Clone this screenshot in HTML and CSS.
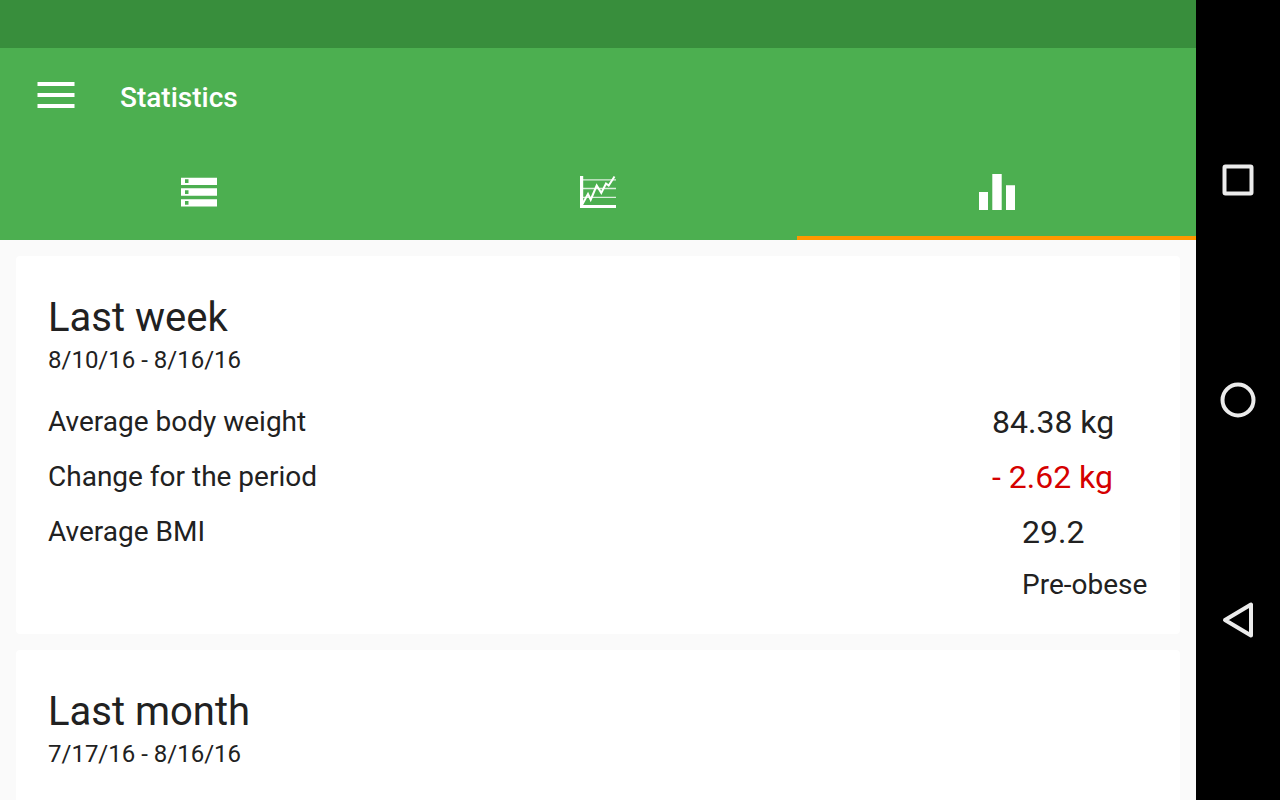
FILE: index.html
```html
<!DOCTYPE html>
<html lang="en">
<head>
    <meta charset="UTF-8">
    <meta name="viewport" content="width=device-width, initial-scale=1.0">
    <title>Statistics</title>
    <link rel="stylesheet" href="styles.css">
</head>
<body>
    <div class="app">
        <header class="header">
            <div class="status-bar"></div>
            <div class="toolbar">
                <button type="button" class="menu-btn" aria-label="Menu">
                    <svg width="38" height="26" viewBox="0 0 38 26" fill="#fff">
                        <path d="M.5 0h37v4H.5zM.5 11h37v4H.5zM.5 22h37v4H.5z"/>
                    </svg>
                </button>
                <h1 class="title">Statistics</h1>
            </div>
            <nav class="tabs">
                <a href="#records" class="tab" aria-label="Records">
                    <svg width="36" height="36" viewBox="0 0 36 36" fill="#fff">
                        <path fill-rule="evenodd" d="M0 3.700h36v7.300H0zM4 5.200v3.800h3.500v-3.800zM0 14.300h36v7.500H0zM4 16.200v3.800h3.500v-3.800zM0 25.200h36v7.300H0zM4 27v3.800h3.500v-3.800z"/>
                    </svg>
                </a>
                <a href="#chart" class="tab" aria-label="Chart">
                    <svg width="36" height="36" viewBox="0 0 36 36" fill="none" stroke="#fff">
                        <path stroke-width="1.300" stroke-opacity=".8" d="M2 5.900h34M2 14.500h34M2 23.300h34"/>
                        <path stroke-width="3.200" d="M1.600 2v30.500H36"/>
                        <path stroke-width="2" d="M2.500 30L8 20l2.700 5.700 6-14.200 4.600 7.500L26 9.500l2.700 2L34.500 2.500"/>
                    </svg>
                </a>
                <a href="#statistics" class="tab active" aria-label="Statistics">
                    <svg width="36" height="36" viewBox="0 0 36 36" fill="#fff">
                        <path d="M0 18h9v18H0zM13.300 0h9.400v36h-9.400zM27 11.300h9V36h-9z"/>
                    </svg>
                </a>
            </nav>
        </header>

        <main class="content">
            <section class="card">
                <h2>Last week</h2>
                <p class="period">8/10/16 - 8/16/16</p>
                <table class="stats">
                    <tr>
                        <th scope="row">Average body weight</th>
                        <td>84.38 kg</td>
                    </tr>
                    <tr>
                        <th scope="row">Change for the period</th>
                        <td class="loss">- 2.62 kg</td>
                    </tr>
                    <tr>
                        <th scope="row">Average BMI</th>
                        <td class="bmi">29.2</td>
                    </tr>
                    <tr>
                        <td></td>
                        <td class="bmi category">Pre-obese</td>
                    </tr>
                </table>
            </section>
            <section class="card">
                <h2>Last month</h2>
                <p class="period">7/17/16 - 8/16/16</p>
            </section>
        </main>
    </div>

    <div class="system-nav">
        <button type="button" aria-label="Recent apps">
            <svg width="40" height="40" viewBox="0 0 40 40">
                <rect x="6.500" y="6.500" width="27" height="27" rx="1"/>
            </svg>
        </button>
        <button type="button" aria-label="Home">
            <svg width="40" height="40" viewBox="0 0 40 40">
                <circle cx="20" cy="20" r="15.500"/>
            </svg>
        </button>
        <button type="button" aria-label="Back">
            <svg width="40" height="40" viewBox="0 0 40 40">
                <path d="M7 20L33 4.500v31z"/>
            </svg>
        </button>
    </div>
</body>
</html>
```
FILE: styles.css
```css
* {
    box-sizing: border-box;
}
body {
    margin: 0;
    display: flex;
    height: 100vh;
    overflow: hidden;
    background-color: #fafafa;
    color: #212121;
    font-family: Roboto, sans-serif;
}
button {
    padding: 0;
    border: none;
    background: none;
    cursor: pointer;
}
svg {
    display: block;
}
.app {
    flex: 1;
    display: flex;
    flex-direction: column;
    min-width: 0;
}
.header {
    flex-shrink: 0;
    background-color: #4caf50;
}
.status-bar {
    height: 48px;
    background-color: #388e3c;
}
.toolbar {
    display: flex;
    align-items: center;
    height: 96px;
    padding: 0 37px 2px;
}
.menu-btn {
    margin-right: 45px;
}
.title {
    margin: 0;
    padding-top: 6px;
    color: white;
    font-size: 28px;
    font-weight: 500;
    line-height: 32px;
}
.tabs {
    display: flex;
    height: 96px;
}
.tab {
    flex: 1;
    display: flex;
    align-items: center;
    justify-content: center;
    border-top: 4px solid transparent;
    border-bottom: 4px solid transparent;
}
.tab.active {
    border-bottom-color: #ff9800;
}
.content {
    flex: 1;
    overflow: hidden;
    padding: 16px;
}
.card {
    margin-bottom: 16px;
    padding: 32px 32px 24px;
    border-radius: 4px;
    background-color: white;
}
h2 {
    margin: 0;
    font-size: 40px;
    font-weight: 400;
    line-height: 60px;
}
.period {
    margin: 0 0 22px;
    font-size: 24px;
    line-height: 24px;
}
.stats {
    width: 100%;
    border-collapse: collapse;
}
.stats th, .stats td {
    height: 55px;
    padding: 0;
    text-align: left;
    white-space: nowrap;
}
.stats th {
    font-size: 28px;
    font-weight: 400;
}
.stats td {
    font-size: 32px;
}
.stats td:last-child {
    width: 156px;
}
.stats .loss {
    color: #d50000;
}
.stats .bmi {
    padding-left: 30px;
}
.stats .category {
    font-size: 28px;
}
.stats tr:last-child td {
    height: 51px;
}
.system-nav {
    display: flex;
    flex-direction: column;
    flex-shrink: 0;
    width: 84px;
    padding: 70px 0;
    background-color: black;
}
.system-nav button {
    flex: 1;
    display: flex;
    align-items: center;
    justify-content: center;
}
.system-nav svg {
    fill: none;
    stroke: #ececec;
    stroke-width: 4;
    stroke-linejoin: round;
}
```
